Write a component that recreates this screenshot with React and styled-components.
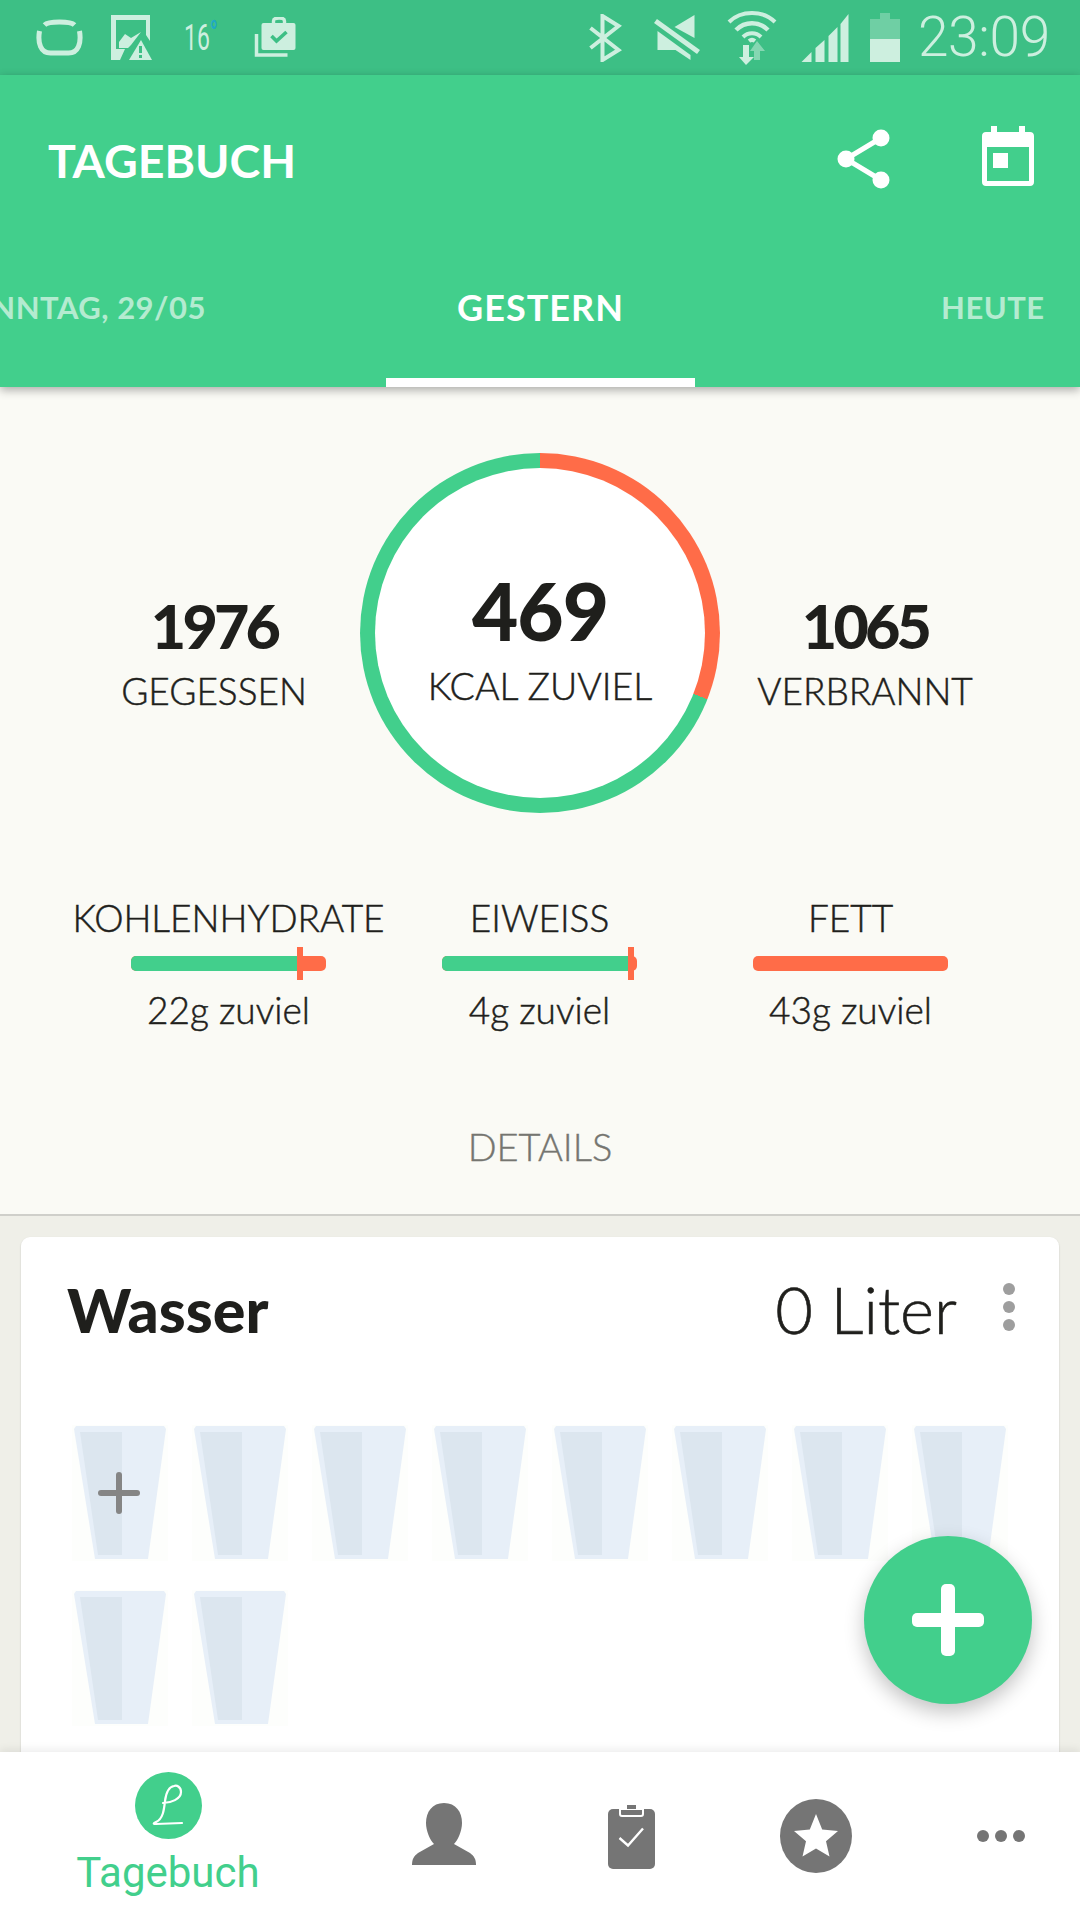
import styled, { createGlobalStyle } from "styled-components";

const GREEN = "#42CF8C";
const ORANGE = "#FF6C48";
const INK = "#1F1F1C";
const PALE = "#CDEFDF";

const GlobalStyle = createGlobalStyle`
  html, body { margin: 0; padding: 0; background: #fff; }
  * { box-sizing: border-box; }
`;

const Page = styled.div`
  position: relative;
  width: 1080px;
  height: 1920px;
  display: flex;
  flex-direction: column;
  overflow: hidden;
  background: #EFEFE8;
  font-family: Lato, "Liberation Sans", sans-serif;
  color: ${INK};
`;

const StatusBar = styled.div`
  height: 75px;
  flex: none;
  background: #3DBF85;
  display: flex;
  align-items: center;
  justify-content: space-between;
  padding: 0 30px 0 36px;
`;

const StatusGroup = styled.div`
  display: flex;
  align-items: center;
  gap: ${(p) => p.$gap}px;
`;

const StatusIcon = styled.span`
  display: flex;
  margin-right: ${(p) => p.$mr || 0}px;
`;

const Temp = styled.span`
  display: inline-block;
  width: 42px;
  margin-left: 4px;
  color: ${PALE};
  font: 400 37px/1 Roboto, sans-serif;
  transform: scaleX(0.62);
  transform-origin: left center;
  white-space: nowrap;
  sup { color: #1FA9C4; font-size: 36px; line-height: 0; vertical-align: 4px; }
`;

const Clock = styled.span`
  color: ${PALE};
  font: 300 55px/1 Roboto, sans-serif;
  letter-spacing: -0.3px;
`;

const Header = styled.header`
  position: relative;
  z-index: 2;
  flex: none;
  height: 312px;
  background: ${GREEN};
  box-shadow: 0 3px 9px rgba(0, 0, 0, 0.32);
  display: flex;
  flex-direction: column;
`;

const TitleRow = styled.div`
  height: 195px;
  flex: none;
  display: flex;
  align-items: flex-start;
  justify-content: space-between;
  padding: 51px 45px 0 48px;
`;

const Title = styled.h1`
  margin: 14px 0 0;
  color: #fff;
  font-size: 46.500px;
  font-weight: 700;
  line-height: 40px;
`;

const HeaderActions = styled.div`
  display: flex;
  gap: 90px;
  svg:first-child { margin-top: 3px; }
`;

const Tabs = styled.div`
  flex: 1;
  display: grid;
  grid-template-columns: 386px 309px 1fr;
  overflow: hidden;
`;

const Tab = styled.div`
  display: flex;
  align-items: center;
  justify-content: ${(p) => p.$justify || "center"};
  padding: ${(p) => p.$pad || "0"};
  padding-bottom: 35px;
  white-space: nowrap;
  font-weight: 700;
  font-size: ${(p) => (p.$active ? 36 : 31)}px;
  letter-spacing: ${(p) => (p.$active ? 1 : 0.5)}px;
  color: ${(p) => (p.$active ? "#fff" : "#B4EBD0")};
  border-bottom: 9px solid ${(p) => (p.$active ? "#fff" : "transparent")};
`;

const Summary = styled.section`
  flex: none;
  height: 829px;
  background: #FAFAF5;
  border-bottom: 2px solid #CFCFCA;
  padding-top: 66px;
  display: flex;
  flex-direction: column;
`;

const RingRow = styled.div`
  display: grid;
  grid-template-columns: 360px 360px 360px;
`;

const Stat = styled.div`
  display: flex;
  flex-direction: column;
  align-items: center;
  justify-content: center;
  padding: 40px ${(p) => p.$right}px 0 ${(p) => p.$left}px;
`;

const StatValue = styled.div`
  font-size: 61px;
  font-weight: 900;
  letter-spacing: -3.800px;
  line-height: 62px;
`;

const StatLabel = styled.div`
  font-size: 37px;
  font-weight: 300;
  -webkit-text-stroke: 0.5px ${INK};
  line-height: 40px;
  margin-top: 14px;
  white-space: nowrap;
`;

const Ring = styled.div`
  width: 360px;
  height: 360px;
  border-radius: 50%;
  padding: 15px;
  background: conic-gradient(${ORANGE} 0 31%, ${GREEN} 31% 100%);
`;

const RingInner = styled.div`
  width: 100%;
  height: 100%;
  border-radius: 50%;
  background: #fff;
  display: flex;
  flex-direction: column;
  align-items: center;
  justify-content: center;
  padding-top: 8px;
`;

const RingValue = styled.div`
  font-size: 80px;
  font-weight: 900;
  line-height: 84px;
  letter-spacing: -1px;
`;

const RingLabel = styled.div`
  font-size: 37.500px;
  font-weight: 300;
  -webkit-text-stroke: 0.5px ${INK};
  line-height: 40px;
  margin-top: 14px;
`;

const Macros = styled.div`
  display: grid;
  grid-template-columns: repeat(3, 311px);
  padding-left: 73px;
  margin-top: 84px;
`;

const Macro = styled.div`
  display: flex;
  flex-direction: column;
  align-items: center;
`;

const MacroLabel = styled.div`
  font-size: 37px;
  font-weight: 300;
  -webkit-text-stroke: 0.5px ${INK};
  line-height: 42px;
  white-space: nowrap;
`;

const MacroBar = styled.div`
  position: relative;
  width: 195px;
  height: 15px;
  margin-top: 17px;
  border-radius: 5px;
  background: ${ORANGE};
`;

const MacroFill = styled.div`
  height: 100%;
  border-radius: 5px 0 0 5px;
  background: ${GREEN};
`;

const MacroMark = styled.div`
  position: absolute;
  top: -9px;
  width: 6px;
  height: 33px;
  background: ${ORANGE};
`;

const MacroNote = styled.div`
  font-size: 37px;
  font-weight: 300;
  -webkit-text-stroke: 0.5px ${INK};
  line-height: 42px;
  margin-top: 18px;
  white-space: nowrap;
`;

const Details = styled.div`
  text-align: center;
  color: #757570;
  font-size: 38px;
  font-weight: 300;
  -webkit-text-stroke: 0.4px #757570;
  line-height: 42px;
  margin-top: 94px;
`;

const Feed = styled.main`
  flex: 1;
  min-height: 0;
  overflow: hidden;
  padding: 21px 21px 0;
`;

const Card = styled.article`
  height: 640px;
  background: #fff;
  border-radius: 9px 9px 0 0;
  box-shadow: 0 1px 2px rgba(0, 0, 0, 0.18);
`;

const CardHead = styled.div`
  display: flex;
  align-items: center;
  justify-content: space-between;
  height: 146px;
  padding: 0 44px 2px 46px;
`;

const CardTitle = styled.h2`
  margin: 0;
  font-size: 61px;
  font-weight: 900;
`;

const CardRight = styled.div`
  display: flex;
  align-items: center;
  gap: 46px;
`;

const Liters = styled.span`
  font: 300 65px/1 Lato, sans-serif;
  -webkit-text-stroke: 0.6px ${INK};
`;

const Kebab = styled.div`
  display: flex;
  flex-direction: column;
  gap: 6px;
  margin-top: -4px;
  span {
    width: 12px;
    height: 12px;
    border-radius: 50%;
    background: #9E9E9E;
  }
`;

const Glasses = styled.div`
  display: grid;
  grid-template-columns: repeat(8, 96px);
  column-gap: 24px;
  row-gap: 29px;
  margin-top: 42px;
  padding-left: 51px;
`;

const Glass = styled.div`
  position: relative;
  width: 96px;
  height: 136px;
  background: #FDFEFC;
  svg { display: block; }
`;

const GlassAdd = styled.div`
  position: absolute;
  left: 26px;
  top: 47px;
  width: 42px;
  height: 42px;
  &::before, &::after {
    content: "";
    position: absolute;
    background: #858585;
    border-radius: 3px;
  }
  &::before { left: 18px; top: 0; width: 6px; height: 42px; }
  &::after { left: 0; top: 18px; width: 42px; height: 6px; }
`;

const Fab = styled.button`
  position: absolute;
  left: 864px;
  top: 1536px;
  width: 168px;
  height: 168px;
  z-index: 3;
  border: 0;
  border-radius: 50%;
  background: ${GREEN};
  box-shadow: 0 8px 20px rgba(0, 0, 0, 0.24);
  &::before, &::after {
    content: "";
    position: absolute;
    background: #fff;
    border-radius: 5px;
  }
  &::before { left: 77px; top: 48px; width: 14px; height: 72px; }
  &::after { left: 48px; top: 77px; width: 72px; height: 14px; }
`;

const BottomNav = styled.nav`
  position: relative;
  z-index: 2;
  flex: none;
  height: 168px;
  background: #fff;
  box-shadow: 0 -3px 8px rgba(0, 0, 0, 0.07);
  display: grid;
  grid-template-columns: 336px 216px 158px 212px 1fr;
  align-items: center;
  justify-items: center;
`;

const NavActive = styled.div`
  display: flex;
  flex-direction: column;
  align-items: center;
  padding-bottom: 7px;
  color: ${GREEN};
  font: 400 42px/1 Roboto, sans-serif;
  span { margin-top: 13px; }
`;

const NavDots = styled.div`
  display: flex;
  gap: 6px;
  span {
    width: 12px;
    height: 12px;
    border-radius: 50%;
    background: #757575;
  }
`;

const GlassIcon = () => (
  <svg width="96" height="136" viewBox="0 0 96 136">
    <path d="M4 1H92L94 4L76 134H23L2 4Z" fill="#E7EFF8" />
    <path d="M8 7H50V130H26Z" fill="#DCE6EF" />
  </svg>
);

const RingGlyph = () => (
  <svg width="47" height="37" viewBox="0 0 46 37" fill="none" stroke={PALE} strokeWidth="5">
    <path d="M8 6C12 2 34 2 38 6" />
    <path d="M3 12C1 24 4 34 14 34H32C42 34 45 24 43 12" />
  </svg>
);

const ImageWarnGlyph = () => (
  <svg width="41" height="46" viewBox="0 0 41 46">
    <path fillRule="evenodd" fill={PALE} d="M0 0H39V26L35 20V5H5V34H14L9 45H0Z" />
    <path fill={PALE} d="M8 33V27L14 19L20 23L30 17L20 30L17 33Z" />
    <path fill={PALE} d="M18 45L30 25L41 45Z" />
    <rect x="28" y="31" width="3" height="7" fill="#3DBF85" />
    <rect x="28" y="40" width="3" height="3" fill="#3DBF85" />
  </svg>
);

const CaseGlyph = () => (
  <svg width="42" height="41" viewBox="0 0 41 41">
    <path fill="none" stroke={PALE} strokeWidth="3.4" d="M19 6V4C19 2 21 1 24.500 1C28 1 30 2 30 4V6" />
    <rect x="7" y="6" width="34" height="27" rx="2" fill={PALE} />
    <path fill="none" stroke={PALE} strokeWidth="3.5" d="M2 17V38H33" />
    <path fill="none" stroke="#3DBF85" strokeWidth="3.6" d="M17 19L22 24L32 15" />
  </svg>
);

const BluetoothGlyph = () => (
  <svg width="34" height="48" viewBox="0 0 33 48" fill="none" stroke={PALE} strokeWidth="4">
    <path d="M2 14L30 36L14 46V2L30 12L2 34" />
  </svg>
);

const MuteGlyph = () => (
  <svg width="48" height="45" viewBox="0 0 47 45" fill={PALE}>
    <path d="M41 0V23L21 12Z" />
    <path d="M4 16L37 40V45L22 35H4Z" />
    <path d="M2 6L45 37" stroke={PALE} strokeWidth="5" />
  </svg>
);

const WifiGlyph = () => (
  <svg width="50" height="54" viewBox="0 0 50 54" fill="none" stroke={PALE}>
    <path d="M2 11C14 -1 36 -1 48 11" strokeWidth="4" />
    <path d="M9 19C18 10 32 10 41 19" strokeWidth="4.5" />
    <path d="M16 26C21 21 29 21 34 26" strokeWidth="4" />
    <path d="M22 30C24 28.500 26 28.500 28 30" strokeWidth="4" />
    <path fill={PALE} stroke="none" d="M16 34H22V46H27L19 54L12 46H16Z" />
    <path fill={PALE} opacity=".5" stroke="none" d="M30 30L38 40H33V49H27V40H23Z" />
  </svg>
);

const SignalGlyph = () => (
  <svg width="48" height="48" viewBox="0 0 47 48" fill={PALE}>
    <path d="M0 48L10 38V48Z" />
    <path d="M14 34L23 26V48H14Z" />
    <path d="M27 22L36 13V48H27Z" />
    <path d="M39 10L47 0V48H39Z" />
  </svg>
);

const BatteryGlyph = () => (
  <svg width="30" height="49" viewBox="0 0 30 49" fill={PALE}>
    <path opacity=".35" d="M10 0H20V6H30V27H0V6H10Z" />
    <rect y="26" width="30" height="23" />
  </svg>
);

const ShareIcon = () => (
  <svg width="54" height="60" viewBox="0 0 54 60" fill="#fff" stroke="#fff">
    <path d="M44 9L9 30L44 51" fill="none" strokeWidth="5" />
    <circle cx="44" cy="9" r="8.500" stroke="none" />
    <circle cx="9" cy="30" r="8.500" stroke="none" />
    <circle cx="44" cy="51" r="8.500" stroke="none" />
  </svg>
);

const CalendarIcon = () => (
  <svg width="54" height="60" viewBox="0 0 52 60">
    <path
      fill="#fff"
      fillRule="evenodd"
      d="M9 0H15V6H37V0H43V6H48C50.500 6 52 7.500 52 10V56C52 58.500 50.500 60 48 60H4C1.500 60 0 58.500 0 56V10C0 7.500 1.500 6 4 6H9ZM5 21V55H47V21Z"
    />
    <rect x="11" y="27" width="15" height="15" fill="#fff" />
  </svg>
);

const LogoIcon = () => (
  <svg width="67" height="67" viewBox="0 0 67 67">
    <circle cx="33.500" cy="33.500" r="33.500" fill={GREEN} />
    <path
      d="M28 31C36 31 46 27 46 20C46 15 42 13 39 14C33 15 31 21 30 29C29 38 28 47 21 50C18 51.500 18 52 21 52L47 51"
      fill="none"
      stroke="#fff"
      strokeWidth="2.200"
      strokeLinecap="round"
    />
  </svg>
);

const PersonIcon = () => (
  <svg width="64" height="66" viewBox="0 0 64 66">
    <path
      fill="#757575"
      d="M32 0C44 0 50 9 50 20C50 28 46 37 42 41L58 50C62 53 64 56 64 62H0C0 56 2 53 6 50L22 41C18 37 14 28 14 20C14 9 20 0 32 0Z"
    />
  </svg>
);

const ClipboardIcon = () => (
  <svg width="47" height="65" viewBox="0 0 47 65">
    <rect y="5" width="47" height="60" rx="5" fill="#757575" />
    <path d="M12 5H35V10C35 11 34 12 33 12H14C13 12 12 11 12 10Z" fill="#757575" stroke="#fff" strokeWidth="2" />
    <path d="M19 1H28V5H19Z" fill="#757575" />
    <path d="M11.500 34L20 41.500L35 24.500" fill="none" stroke="#fff" strokeWidth="2.400" />
  </svg>
);

const StarIcon = () => (
  <svg width="72" height="74" viewBox="0 0 72 74">
    <ellipse cx="36" cy="37" rx="36" ry="37" fill="#757575" />
    <path
      d="M36 15L42.200 30.500L58 31.900L46 42.200L49.500 57.600L36 49.500L22.500 57.600L26 42.200L14 31.900L29.800 30.500Z"
      fill="#fff"
    />
  </svg>
);

const macros = [
  { label: "KOHLENHYDRATE", note: "22g zuviel", fill: 166, mark: 166 },
  { label: "EIWEISS", note: "4g zuviel", fill: 186, mark: 186 },
  { label: "FETT", note: "43g zuviel", fill: 0, mark: null },
];

export default function App() {
  return (
    <Page>
      <GlobalStyle />
      <StatusBar>
        <StatusGroup $gap={28}>
          <RingGlyph />
          <ImageWarnGlyph />
          <Temp>
            16<sup>°</sup>
          </Temp>
          <CaseGlyph />
        </StatusGroup>
        <StatusGroup $gap={21}>
          <StatusIcon $mr={10}><BluetoothGlyph /></StatusIcon>
          <StatusIcon $mr={5}><MuteGlyph /></StatusIcon>
          <StatusIcon $mr={3}><WifiGlyph /></StatusIcon>
          <StatusIcon><SignalGlyph /></StatusIcon>
          <StatusIcon $mr={-3}><BatteryGlyph /></StatusIcon>
          <Clock>23:09</Clock>
        </StatusGroup>
      </StatusBar>

      <Header>
        <TitleRow>
          <Title>TAGEBUCH</Title>
          <HeaderActions>
            <ShareIcon />
            <CalendarIcon />
          </HeaderActions>
        </TitleRow>
        <Tabs>
          <Tab $justify="flex-end" $pad="0 180px 0 0">SONNTAG, 29/05</Tab>
          <Tab $active>GESTERN</Tab>
          <Tab $justify="flex-start" $pad="0 0 0 246px">HEUTE</Tab>
        </Tabs>
      </Header>

      <Summary>
        <RingRow>
          <Stat $left={68} $right={0}>
            <StatValue>1976</StatValue>
            <StatLabel>GEGESSEN</StatLabel>
          </Stat>
          <Ring>
            <RingInner>
              <RingValue>469</RingValue>
              <RingLabel>KCAL ZUVIEL</RingLabel>
            </RingInner>
          </Ring>
          <Stat $left={0} $right={70}>
            <StatValue>1065</StatValue>
            <StatLabel>VERBRANNT</StatLabel>
          </Stat>
        </RingRow>

        <Macros>
          {macros.map((m) => (
            <Macro key={m.label}>
              <MacroLabel>{m.label}</MacroLabel>
              <MacroBar>
                <MacroFill style={{ width: m.fill }} />
                {m.mark !== null && <MacroMark style={{ left: m.mark }} />}
              </MacroBar>
              <MacroNote>{m.note}</MacroNote>
            </Macro>
          ))}
        </Macros>

        <Details>DETAILS</Details>
      </Summary>

      <Feed>
        <Card>
          <CardHead>
            <CardTitle>Wasser</CardTitle>
            <CardRight>
              <Liters>0 Liter</Liters>
              <Kebab>
                <span />
                <span />
                <span />
              </Kebab>
            </CardRight>
          </CardHead>
          <Glasses>
            {Array.from({ length: 10 }).map((_, i) => (
              <Glass key={i}>
                <GlassIcon />
                {i === 0 && <GlassAdd />}
              </Glass>
            ))}
          </Glasses>
        </Card>
      </Feed>

      <Fab aria-label="Hinzufügen" />

      <BottomNav>
        <NavActive>
          <LogoIcon />
          <span>Tagebuch</span>
        </NavActive>
        <PersonIcon />
        <ClipboardIcon />
        <StarIcon />
        <NavDots>
          <span />
          <span />
          <span />
        </NavDots>
      </BottomNav>
    </Page>
  );
}
